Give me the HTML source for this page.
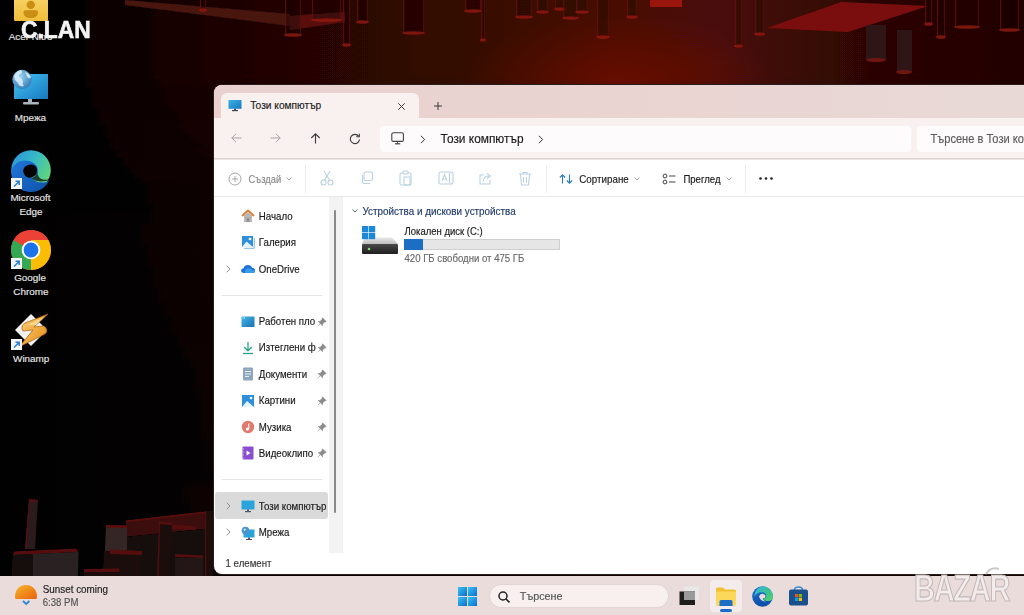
<!DOCTYPE html>
<html><head><meta charset="utf-8">
<style>
*{margin:0;padding:0;box-sizing:border-box}
html,body{width:1024px;height:615px;overflow:hidden;background:#050202;font-family:"Liberation Sans",sans-serif}
.a{position:absolute}
svg{position:absolute;overflow:visible}
.t{position:absolute;white-space:nowrap;line-height:1;-webkit-text-stroke:0.15px currentColor}
</style></head><body>
<svg style="left:0;top:0" width="1024" height="615" viewBox="0 0 1024 615">
<defs>
<linearGradient id="gt" x1="0" y1="0" x2="1024" y2="0" gradientUnits="userSpaceOnUse">
<stop offset="0" stop-color="#020101"/><stop offset="0.07" stop-color="#040202"/><stop offset="0.2" stop-color="#1a0505"/><stop offset="0.3" stop-color="#260605"/>
<stop offset="0.45" stop-color="#340806"/><stop offset="0.6" stop-color="#480a06"/><stop offset="0.7" stop-color="#4a0a07"/><stop offset="0.85" stop-color="#2c0606"/><stop offset="1" stop-color="#220505"/>
</linearGradient>
<radialGradient id="glow" cx="620" cy="85" r="120" gradientTransform="translate(620 85) scale(1.3 0.6) translate(-620 -85)" gradientUnits="userSpaceOnUse">
<stop offset="0" stop-color="#8e1604" stop-opacity="0.45"/><stop offset="1" stop-color="#8e1604" stop-opacity="0"/>
</radialGradient>
<linearGradient id="g2" x1="0" y1="0" x2="1" y2="0">
<stop offset="0" stop-color="#030101"/><stop offset="0.5" stop-color="#070303"/><stop offset="1" stop-color="#120404"/>
</linearGradient>
<linearGradient id="gv" x1="0" y1="0" x2="0" y2="1">
<stop offset="0" stop-color="#000" stop-opacity="0.1"/><stop offset="1" stop-color="#000" stop-opacity="0.0"/>
</linearGradient>
<linearGradient id="vmg" x1="0" y1="0" x2="0" y2="615" gradientUnits="userSpaceOnUse">
<stop offset="0" stop-color="#fff"/><stop offset="0.12" stop-color="#fff"/><stop offset="0.3" stop-color="#666"/><stop offset="0.6" stop-color="#3a3a3a"/><stop offset="1" stop-color="#2a2a2a"/>
</linearGradient>
<mask id="vm" maskUnits="userSpaceOnUse" x="0" y="0" width="1024" height="615"><rect x="0" y="0" width="1024" height="615" fill="url(#vmg)"/></mask>
<filter id="bl" x="-5%" y="-5%" width="110%" height="110%"><feGaussianBlur stdDeviation="0.7"/></filter>
</defs>
<rect x="0" y="0" width="1024" height="615" fill="url(#g2)"/>
<g filter="url(#bl)">
<rect x="0" y="0" width="1024" height="615" fill="url(#gt)" mask="url(#vm)"/>
<rect x="0" y="0" width="1024" height="92" fill="url(#glow)"/>
<path d="M125 0 L290 14 L290 26 L125 5z" fill="#4a1210"/>
<path d="M290 16 L345 12 L345 22 L290 30z" fill="#5a100c"/>
<rect x="343" y="0" width="7" height="45" fill="#1a0606" opacity="0.4"/><rect x="343" y="0" width="1.2" height="45" fill="#7a1410" opacity="0.6"/><rect x="348.8" y="0" width="1.2" height="45" fill="#7a1410" opacity="0.4"/><ellipse cx="346.5" cy="45" rx="4.5" ry="1.8" fill="#a01a10" opacity="0.7"/><rect x="357" y="0" width="11" height="22" fill="#1a0606" opacity="0.4"/><rect x="357" y="0" width="1.2" height="22" fill="#7a1410" opacity="0.6"/><rect x="366.8" y="0" width="1.2" height="22" fill="#7a1410" opacity="0.4"/><ellipse cx="362.5" cy="22" rx="6.5" ry="1.8" fill="#a01a10" opacity="0.7"/><rect x="403" y="0" width="21" height="33" fill="#1a0606" opacity="0.4"/><rect x="403" y="0" width="1.2" height="33" fill="#7a1410" opacity="0.6"/><rect x="422.8" y="0" width="1.2" height="33" fill="#7a1410" opacity="0.4"/><ellipse cx="413.5" cy="33" rx="11.5" ry="1.8" fill="#a01a10" opacity="0.7"/><rect x="465" y="0" width="16" height="11" fill="#1a0606" opacity="0.4"/><rect x="465" y="0" width="1.2" height="11" fill="#7a1410" opacity="0.6"/><rect x="479.8" y="0" width="1.2" height="11" fill="#7a1410" opacity="0.4"/><ellipse cx="473.0" cy="11" rx="9.0" ry="1.8" fill="#a01a10" opacity="0.7"/><rect x="481" y="0" width="4" height="40" fill="#1a0606" opacity="0.4"/><rect x="481" y="0" width="1.2" height="40" fill="#7a1410" opacity="0.6"/><rect x="483.8" y="0" width="1.2" height="40" fill="#7a1410" opacity="0.4"/><ellipse cx="483.0" cy="40" rx="3.0" ry="1.8" fill="#a01a10" opacity="0.7"/><rect x="516" y="0" width="16" height="17" fill="#1a0606" opacity="0.4"/><rect x="516" y="0" width="1.2" height="17" fill="#7a1410" opacity="0.6"/><rect x="530.8" y="0" width="1.2" height="17" fill="#7a1410" opacity="0.4"/><ellipse cx="524.0" cy="17" rx="9.0" ry="1.8" fill="#a01a10" opacity="0.7"/><rect x="537" y="0" width="11" height="12" fill="#1a0606" opacity="0.4"/><rect x="537" y="0" width="1.2" height="12" fill="#7a1410" opacity="0.6"/><rect x="546.8" y="0" width="1.2" height="12" fill="#7a1410" opacity="0.4"/><ellipse cx="542.5" cy="12" rx="6.5" ry="1.8" fill="#a01a10" opacity="0.7"/><rect x="555" y="0" width="10" height="9" fill="#1a0606" opacity="0.4"/><rect x="555" y="0" width="1.2" height="9" fill="#7a1410" opacity="0.6"/><rect x="563.8" y="0" width="1.2" height="9" fill="#7a1410" opacity="0.4"/><ellipse cx="560.0" cy="9" rx="6.0" ry="1.8" fill="#a01a10" opacity="0.7"/><rect x="563" y="0" width="15" height="18" fill="#1a0606" opacity="0.4"/><rect x="563" y="0" width="1.2" height="18" fill="#7a1410" opacity="0.6"/><rect x="576.8" y="0" width="1.2" height="18" fill="#7a1410" opacity="0.4"/><ellipse cx="570.5" cy="18" rx="8.5" ry="1.8" fill="#a01a10" opacity="0.7"/><rect x="576" y="0" width="12" height="12" fill="#1a0606" opacity="0.4"/><rect x="576" y="0" width="1.2" height="12" fill="#7a1410" opacity="0.6"/><rect x="586.8" y="0" width="1.2" height="12" fill="#7a1410" opacity="0.4"/><ellipse cx="582.0" cy="12" rx="7.0" ry="1.8" fill="#a01a10" opacity="0.7"/><rect x="597" y="0" width="12" height="37" fill="#1a0606" opacity="0.4"/><rect x="597" y="0" width="1.2" height="37" fill="#7a1410" opacity="0.6"/><rect x="607.8" y="0" width="1.2" height="37" fill="#7a1410" opacity="0.4"/><ellipse cx="603.0" cy="37" rx="7.0" ry="1.8" fill="#a01a10" opacity="0.7"/><rect x="627" y="0" width="10" height="17" fill="#1a0606" opacity="0.4"/><rect x="627" y="0" width="1.2" height="17" fill="#7a1410" opacity="0.6"/><rect x="635.8" y="0" width="1.2" height="17" fill="#7a1410" opacity="0.4"/><ellipse cx="632.0" cy="17" rx="6.0" ry="1.8" fill="#a01a10" opacity="0.7"/><rect x="735" y="0" width="7" height="46" fill="#1a0606" opacity="0.4"/><rect x="735" y="0" width="1.2" height="46" fill="#7a1410" opacity="0.6"/><rect x="740.8" y="0" width="1.2" height="46" fill="#7a1410" opacity="0.4"/><ellipse cx="738.5" cy="46" rx="4.5" ry="1.8" fill="#a01a10" opacity="0.7"/><rect x="755" y="0" width="9" height="34" fill="#1a0606" opacity="0.4"/><rect x="755" y="0" width="1.2" height="34" fill="#7a1410" opacity="0.6"/><rect x="762.8" y="0" width="1.2" height="34" fill="#7a1410" opacity="0.4"/><ellipse cx="759.5" cy="34" rx="5.5" ry="1.8" fill="#a01a10" opacity="0.7"/><rect x="925" y="0" width="7" height="24" fill="#1a0606" opacity="0.4"/><rect x="925" y="0" width="1.2" height="24" fill="#7a1410" opacity="0.6"/><rect x="930.8" y="0" width="1.2" height="24" fill="#7a1410" opacity="0.4"/><ellipse cx="928.5" cy="24" rx="4.5" ry="1.8" fill="#a01a10" opacity="0.7"/><rect x="937" y="0" width="8" height="37" fill="#1a0606" opacity="0.4"/><rect x="937" y="0" width="1.2" height="37" fill="#7a1410" opacity="0.6"/><rect x="943.8" y="0" width="1.2" height="37" fill="#7a1410" opacity="0.4"/><ellipse cx="941.0" cy="37" rx="5.0" ry="1.8" fill="#a01a10" opacity="0.7"/><rect x="955" y="0" width="24" height="27" fill="#1a0606" opacity="0.4"/><rect x="955" y="0" width="1.2" height="27" fill="#7a1410" opacity="0.6"/><rect x="977.8" y="0" width="1.2" height="27" fill="#7a1410" opacity="0.4"/><ellipse cx="967.0" cy="27" rx="13.0" ry="1.8" fill="#a01a10" opacity="0.7"/><rect x="1000" y="0" width="19" height="30" fill="#1a0606" opacity="0.4"/><rect x="1000" y="0" width="1.2" height="30" fill="#7a1410" opacity="0.6"/><rect x="1017.8" y="0" width="1.2" height="30" fill="#7a1410" opacity="0.4"/><ellipse cx="1009.5" cy="30" rx="10.5" ry="1.8" fill="#a01a10" opacity="0.7"/><rect x="285" y="0" width="16" height="35" fill="#1a0606" opacity="0.4"/><rect x="285" y="0" width="1.2" height="35" fill="#7a1410" opacity="0.6"/><rect x="299.8" y="0" width="1.2" height="35" fill="#7a1410" opacity="0.4"/><ellipse cx="293.0" cy="35" rx="9.0" ry="1.8" fill="#a01a10" opacity="0.7"/><rect x="312" y="0" width="29" height="20" fill="#1a0606" opacity="0.4"/><rect x="312" y="0" width="1.2" height="20" fill="#7a1410" opacity="0.6"/><rect x="339.8" y="0" width="1.2" height="20" fill="#7a1410" opacity="0.4"/><ellipse cx="326.5" cy="20" rx="15.5" ry="1.8" fill="#a01a10" opacity="0.7"/><rect x="200" y="0" width="6" height="10" fill="#1a0606" opacity="0.4"/><rect x="200" y="0" width="1.2" height="10" fill="#7a1410" opacity="0.6"/><rect x="204.8" y="0" width="1.2" height="10" fill="#7a1410" opacity="0.4"/><ellipse cx="203.0" cy="10" rx="4.0" ry="1.8" fill="#a01a10" opacity="0.7"/>
<path d="M767 28 L841 2 L928 6 L848 32z" fill="#7a0e08"/>
<rect x="866" y="25" width="20" height="35" fill="#2e1a1a" opacity="0.8"/><ellipse cx="876" cy="60" rx="10" ry="2" fill="#9a1a10" opacity="0.6"/>
<rect x="897" y="30" width="15" height="42" fill="#2e1a1a" opacity="0.8"/><ellipse cx="904" cy="72" rx="8" ry="2" fill="#9a1a10" opacity="0.6"/>
<rect x="650" y="0" width="32" height="7" fill="#9a160a"/>
<path d="M29 499 L38 500 L35 549 L25 549z" fill="#2a1a1a"/><path d="M29 499 L38 500 L38 502 L29 501z" fill="#5a0e0a"/><path d="M25 549 L29 499 L30 499 L26.5 549z" fill="#6a0e0a" opacity="0.7"/>
<path d="M14 551.5 L76 548.5 L78.5 552 L13 555z" fill="#560c0a"/><path d="M13 555 L78.5 552 L78 577 L12 577z" fill="#2c2424"/><path d="M13 555 L33 554 L33 577 L12 577z" fill="#180c0c"/>
<path d="M126 520.5 L213 510.8 L213 528 L126 536.7z" fill="#3a0e0c"/><path d="M126 520.5 L213 510.8 L213 512.5 L126 522.3z" fill="#5a0e0a"/><path d="M126 536.7 L213 528 L213 577 L126 577z" fill="#140808"/>
<path d="M106 525 L127 525.5 L127 550.6 L105 551z" fill="#342828"/><path d="M106 525 L127 525.5 L127 528 L106 527.5z" fill="#5e0e0a"/>
<path d="M104 551 L142 552 L142 577 L103 577z" fill="#1c0e0e"/><path d="M110 549.6 L142 551 L142 555 L110 554z" fill="#560c0a"/>
<path d="M159 521.6 L172 522.5 L171 577 L157 577z" fill="#1e1010"/><path d="M159 521.6 L172 522.5 L172 525 L159 524z" fill="#560c0a"/><path d="M157 577 L159 521.6 L160.2 521.6 L158.5 577z" fill="#6a0e0a" opacity="0.7"/>
<path d="M172 524.8 L195.7 526 L195.7 530 L172 529z" fill="#560c0a"/><path d="M175 554 L203 555.5 L203 558 L175 557z" fill="#560c0a"/><path d="M175 557 L203 558 L203 577 L175 577z" fill="#201212"/>
<path d="M84 569 L119.4 568.5 L119.4 572 L84 572.5z" fill="#560c0a"/><path d="M84 572.5 L119.4 572 L119.4 577 L84 577z" fill="#1c0e0e"/>
<path d="M205 511 L213 510.5 L213 577 L205 577z" fill="#1a0c0c"/><path d="M205 511 L206.2 511 L206.2 577 L205 577z" fill="#6a0e0a" opacity="0.7"/>
</g>
</svg>
<svg style="left:14px;top:0px" width="34" height="21" viewBox="0 0 34 21"><defs><linearGradient id="uy" x1="0" y1="0" x2="0" y2="1"><stop offset="0" stop-color="#f7d46a"/><stop offset="1" stop-color="#f0bd3a"/></linearGradient></defs>
<rect x="0" y="-4" width="34" height="25" rx="1.5" fill="url(#uy)"/>
<circle cx="16.8" cy="4.9" r="4.2" fill="#c98e12"/><path d="M9.4 12 Q9.4 10.3 11.5 10.3 H22 Q24 10.3 24 12 Q24 18 16.7 18 Q9.4 18 9.4 12z" fill="#c98e12"/></svg>
<div class="t" style="left:8.8px;top:32.17px;font-size:9.8px;color:#e8e8e8;">Acer Nitro</div>
<div class="t" style="left:21.0px;top:18.52px;font-size:22.8px;color:#f4f4f4;font-weight:bold;transform:scaleY(1.07);transform-origin:0 19.38px;-webkit-text-stroke:0.6px #f4f4f4;">C.LAN</div>
<svg style="left:12px;top:68px" width="40" height="38" viewBox="0 0 40 38"><defs><linearGradient id="mon" x1="0" y1="0" x2="1" y2="1"><stop offset="0" stop-color="#44c4f2"/><stop offset="1" stop-color="#1878c0"/></linearGradient>
<radialGradient id="glb" cx="0.4" cy="0.35" r="0.7"><stop offset="0" stop-color="#9fd4f0"/><stop offset="1" stop-color="#2f79b8"/></radialGradient></defs>
<rect x="2" y="6" width="34" height="25" fill="url(#mon)"/>
<rect x="16" y="31" width="4" height="3" fill="#a9b4bc"/><rect x="11" y="34" width="16" height="2.4" rx="1" fill="#a9b4bc"/>
<circle cx="10" cy="11.5" r="9.7" fill="url(#glb)"/>
<path d="M2 8 q2 -5 7 -6 q2 2 0 4 q-3 0 -2 3 q3 1 4 4 q-1 3 1 5 q-3 1 -5 -1 q-1 -3 -3 -4 q-2 -2 -2 -5z M13 4 q4 1 6 5 q-1 2 -3 1 q-2 -3 -3 -6z" fill="#d6ecf8" opacity="0.9"/></svg>
<div class="t" style="left:14.8px;top:113.38px;font-size:9.9px;color:#e8e8e8;">Мрежа</div>
<svg style="left:11px;top:150px" width="40" height="40" viewBox="0 0 40 40"><defs><linearGradient id="e1" x1="0" y1="0" x2="1" y2="0.6"><stop offset="0" stop-color="#2a8ee0"/><stop offset="0.5" stop-color="#36b8c8"/><stop offset="1" stop-color="#62d67a"/></linearGradient>
<linearGradient id="e2" x1="0" y1="0" x2="1" y2="1"><stop offset="0" stop-color="#1f78d8"/><stop offset="1" stop-color="#0f50a8"/></linearGradient></defs>
<circle cx="20" cy="20" r="19.8" fill="url(#e1)"/>
<path d="M0.3 21 Q3 11 14 10.5 Q26 11 27 20 Q27 26 20 27.5 Q24 33 33 32.5 Q37 32 38.5 29.5 A19.8 19.8 0 0 1 0.3 21z" fill="url(#e2)"/>
<path d="M12 21 Q13 14.5 20 14.5 Q26.5 15 26 21 Q25.5 26 20 27.5 Q14 29 12 21z" fill="#060202"/>
<path d="M26 21 Q26 27 20 28 Q23 31 30 31.5 Q36 31.5 38.6 29 Q36 30 32 29.5 Q27 29 26 21z" fill="#0a0303" opacity="0.7"/></svg>
<svg style="left:11px;top:178px" width="11" height="11" viewBox="0 0 11 11"><rect width="11" height="11" fill="#f4f4f4"/><path d="M3 8.5 L8 3.5 M4.5 3.2 H8.2 V7" stroke="#2b7fd0" stroke-width="1.5" fill="none"/></svg>
<div class="t" style="left:10.4px;top:193.39px;font-size:9.9px;color:#e8e8e8;">Microsoft</div>
<div class="t" style="left:19.5px;top:206.89px;font-size:9.9px;color:#e8e8e8;">Edge</div>
<svg style="left:11px;top:230px" width="40" height="40" viewBox="0 0 40 40"><circle cx="20" cy="20" r="20" fill="#e94234"/>
<path d="M20 20 L2.7 10 A20 20 0 0 0 20 40 Z" fill="#34a853"/>
<path d="M20 20 L20 40 A20 20 0 0 0 37.3 10 L20 10z" fill="#fbbc04"/>
<path d="M20 20 L2.7 10 A20 20 0 0 1 20 0 A20 20 0 0 1 37.3 10 L20 10z" fill="#ea4335"/>
<circle cx="20" cy="20" r="9.3" fill="#fff"/><circle cx="20" cy="20" r="7.4" fill="#1a73e8"/></svg>
<svg style="left:11px;top:258px" width="11" height="11" viewBox="0 0 11 11"><rect width="11" height="11" fill="#f4f4f4"/><path d="M3 8.5 L8 3.5 M4.5 3.2 H8.2 V7" stroke="#2b7fd0" stroke-width="1.5" fill="none"/></svg>
<div class="t" style="left:14.2px;top:273.38px;font-size:9.9px;color:#e8e8e8;">Google</div>
<div class="t" style="left:13.3px;top:287.08px;font-size:9.9px;color:#e8e8e8;">Chrome</div>
<svg style="left:14px;top:313px" width="34" height="34" viewBox="0 0 34 34"><defs><linearGradient id="wb" x1="0" y1="0" x2="1" y2="1"><stop offset="0" stop-color="#ffd37a"/><stop offset="1" stop-color="#e08a12"/></linearGradient></defs>
<path d="M17 1 L33 17 L17 33 L1 17z" fill="#f2f2f2"/>
<path d="M34 1 L11 10 Q7 12 8 16 L9 18 L19 17 L5 34 L31 21 Q34 19 32 15 L30 13 L20 14z" fill="url(#wb)" stroke="#a85a08" stroke-width="0.7"/><path d="M30 4 L13 12 L22 12z" fill="#ffe6a8" opacity="0.7"/></svg>
<svg style="left:11px;top:339px" width="11" height="11" viewBox="0 0 11 11"><rect width="11" height="11" fill="#f4f4f4"/><path d="M3 8.5 L8 3.5 M4.5 3.2 H8.2 V7" stroke="#2b7fd0" stroke-width="1.5" fill="none"/></svg>
<div class="t" style="left:13.1px;top:354.19px;font-size:9.9px;color:#e8e8e8;">Winamp</div>
<div class="a" style="left:214px;top:85px;width:820px;height:489px;background:#fff;border-radius:8px 0 0 8px;box-shadow:0 0 0 1px #2a1c1c"></div>
<div class="a" style="left:214px;top:85px;width:820px;height:34px;background:linear-gradient(90deg,#e8d1ce 0%,#ead4d1 50%,#e8d9d7 100%);border-radius:8px 0 0 0"></div>
<div class="a" style="left:221px;top:93px;width:198px;height:26px;background:#f8f1f0;border-radius:6px 6px 0 0"></div>
<div class="a" style="left:214px;top:118px;width:820px;height:41px;background:#f8f1f0;border-bottom:1px solid #dcd3d3"></div>
<svg style="left:228px;top:99px" width="14" height="13" viewBox="0 0 14 13"><defs><linearGradient id="tm" x1="0" y1="0" x2="1" y2="1"><stop offset="0" stop-color="#3ab4e6"/><stop offset="1" stop-color="#1877c0"/></linearGradient></defs>
<rect x="0.5" y="1" width="13" height="8.8" fill="url(#tm)"/><rect x="6" y="9.8" width="2" height="1.5" fill="#445"/><rect x="4" y="11" width="6" height="1.2" fill="#445"/></svg>
<div class="t" style="left:250.2px;top:100.93px;font-size:10.2px;color:#1a1a1a;">Този компютър</div>
<svg style="left:397.5px;top:102.5px" width="7" height="7" viewBox="0 0 7 7"><path d="M0.3 0.3 L6.7 6.7 M6.7 0.3 L0.3 6.7" stroke="#333" stroke-width="0.95"/></svg>
<svg style="left:433.5px;top:102px" width="8" height="8" viewBox="0 0 8 8"><path d="M4 0 V8 M0 4 H8" stroke="#333" stroke-width="0.95"/></svg>
<svg style="left:231px;top:133px" width="11" height="10" viewBox="0 0 11 10"><path d="M10.5 5 H0.8 M5 0.8 L0.8 5 L5 9.2" stroke="#a8a4a4" stroke-width="1" fill="none"/></svg>
<svg style="left:270px;top:133px" width="11" height="10" viewBox="0 0 11 10"><path d="M0.5 5 H10.2 M6 0.8 L10.2 5 L6 9.2" stroke="#a8a4a4" stroke-width="1" fill="none"/></svg>
<svg style="left:310px;top:133px" width="11" height="11" viewBox="0 0 11 11"><path d="M5.5 10.5 V0.8 M1.3 5 L5.5 0.8 L9.7 5" stroke="#3a3a3a" stroke-width="1.1" fill="none"/></svg>
<svg style="left:349px;top:133px" width="12" height="12" viewBox="0 0 12 12"><path d="M9.6 3.2 A4.6 4.6 0 1 0 10.5 6.5" stroke="#3a3a3a" stroke-width="1.1" fill="none"/><path d="M10.3 0.8 V3.8 H7.3" stroke="#3a3a3a" stroke-width="1.1" fill="none"/></svg>
<div class="a" style="left:380px;top:126px;width:531px;height:26px;background:#fdfbfb;border-radius:4px"></div>
<svg style="left:391px;top:132px" width="14" height="13" viewBox="0 0 14 13"><rect x="0.8" y="0.8" width="11.6" height="8.6" rx="1.5" stroke="#404040" stroke-width="1.1" fill="none"/><path d="M4 11.8 H9.2" stroke="#404040" stroke-width="1.2"/><path d="M6.6 9.4 V11.5" stroke="#404040" stroke-width="1"/></svg>
<svg style="left:420px;top:135px" width="6" height="9" viewBox="0 0 6 9"><path d="M1 0.8 L4.6 4.5 L1 8.2" stroke="#333" stroke-width="1" fill="none"/></svg>
<div class="t" style="left:440.6px;top:134.08px;font-size:11.9px;color:#1a1a1a;transform:scaleY(1.12);transform-origin:0 10.12px;">Този компютър</div>
<svg style="left:538px;top:135px" width="6" height="9" viewBox="0 0 6 9"><path d="M1 0.8 L4.6 4.5 L1 8.2" stroke="#333" stroke-width="1" fill="none"/></svg>
<div class="a" style="left:917px;top:126px;width:120px;height:26px;background:#fdfbfb;border-radius:4px"></div>
<div class="t" style="left:930.5px;top:134.26px;font-size:11.1px;color:#5c5c5c;transform:scaleY(1.08);transform-origin:0 9.43px;">Търсене в Този компютър</div>
<div class="a" style="left:214px;top:159px;width:820px;height:38px;background:#ffffff;border-top:1px solid #ebe4e4;border-bottom:1px solid #e8e8e8"></div>
<svg style="left:228px;top:172px" width="14" height="14" viewBox="0 0 14 14"><circle cx="7" cy="7" r="6" stroke="#a9a9a9" stroke-width="1" fill="none"/><path d="M7 4 V10 M4 7 H10" stroke="#a9a9a9" stroke-width="1"/></svg>
<div class="t" style="left:248.5px;top:175.21px;font-size:9.4px;color:#8a8a8a;transform:scaleY(1.1);transform-origin:0 7.99px;">Създай</div>
<svg style="left:286px;top:177px" width="6" height="4" viewBox="0 0 6 4"><path d="M0.5 0.5 L3 3 L5.5 0.5" stroke="#999" stroke-width="0.9" fill="none"/></svg>
<div class="a" style="left:305px;top:165px;width:1px;height:28px;background:#ececec;"></div>
<svg style="left:320px;top:170px" width="14" height="16" viewBox="0 0 14 16"><path d="M4 1 L10 11 M10 1 L4 11" stroke="#b9d2e2" stroke-width="1.1"/><circle cx="3.5" cy="12.5" r="2.5" stroke="#b9d2e2" stroke-width="1.1" fill="none"/><circle cx="10.5" cy="12.5" r="2.5" stroke="#b9d2e2" stroke-width="1.1" fill="none"/></svg>
<svg style="left:360px;top:171px" width="14" height="14" viewBox="0 0 14 14"><rect x="4" y="1" width="8.5" height="8.5" rx="1.5" stroke="#b9d2e2" stroke-width="1.1" fill="none"/><path d="M2.5 4 V11 Q2.5 12.5 4 12.5 H10" stroke="#b9d2e2" stroke-width="1.1" fill="none"/></svg>
<svg style="left:399px;top:170px" width="14" height="16" viewBox="0 0 14 16"><rect x="1" y="3" width="11" height="12" rx="1.5" stroke="#b9d2e2" stroke-width="1.1" fill="none"/><rect x="4" y="1" width="5" height="3" rx="1" stroke="#b9d2e2" stroke-width="1.1" fill="#fff"/><rect x="5" y="7" width="6" height="8" stroke="#b9d2e2" stroke-width="1" fill="none"/></svg>
<svg style="left:438px;top:171px" width="16" height="14" viewBox="0 0 16 14"><rect x="1" y="1" width="14" height="12" rx="2" stroke="#b9d2e2" stroke-width="1.1" fill="none"/><path d="M4 10 L6.5 3.5 L9 10 M5 8 H8 M11.5 2 V12" stroke="#b9d2e2" stroke-width="1.1" fill="none"/></svg>
<svg style="left:478px;top:171px" width="15" height="14" viewBox="0 0 15 14"><path d="M6 4 H2 V13 H12 V9" stroke="#b9d2e2" stroke-width="1.1" fill="none"/><path d="M5.5 10 Q6 5 11 5 M9 2.5 L12.5 5 L9 7.5" stroke="#b9d2e2" stroke-width="1.1" fill="none"/></svg>
<svg style="left:518px;top:171px" width="14" height="15" viewBox="0 0 14 15"><path d="M1 3 H13 M5 3 V1.5 H9 V3 M2.5 3 L3.5 14 H10.5 L11.5 3 M5.5 6 V11.5 M8.5 6 V11.5" stroke="#b9d2e2" stroke-width="1.1" fill="none"/></svg>
<div class="a" style="left:546px;top:165px;width:1px;height:28px;background:#ececec;"></div>
<svg style="left:559px;top:174px" width="15" height="10" viewBox="0 0 15 10"><path d="M3.5 9.5 V0.8 M0.8 3.5 L3.5 0.8 L6.2 3.5" stroke="#2a7ab8" stroke-width="1.1" fill="none"/><path d="M10.5 0.5 V9.2 M7.8 6.5 L10.5 9.2 L13.2 6.5" stroke="#2a7ab8" stroke-width="1.1" fill="none"/></svg>
<div class="t" style="left:579.3px;top:174.87px;font-size:9.8px;color:#1a1a1a;transform:scaleY(1.1);transform-origin:0 8.33px;">Сортиране</div>
<svg style="left:634px;top:177px" width="6" height="4" viewBox="0 0 6 4"><path d="M0.5 0.5 L3 3 L5.5 0.5" stroke="#999" stroke-width="0.9" fill="none"/></svg>
<svg style="left:662px;top:173px" width="15" height="12" viewBox="0 0 15 12"><circle cx="3" cy="3" r="1.9" stroke="#444" stroke-width="1" fill="none"/><circle cx="3" cy="9" r="1.9" stroke="#444" stroke-width="1" fill="none"/><path d="M7 3 H13.5 M7 9 H13.5" stroke="#444" stroke-width="1"/></svg>
<div class="t" style="left:683.4px;top:175.04px;font-size:9.6px;color:#1a1a1a;transform:scaleY(1.1);transform-origin:0 8.16px;">Преглед</div>
<svg style="left:726px;top:177px" width="6" height="4" viewBox="0 0 6 4"><path d="M0.5 0.5 L3 3 L5.5 0.5" stroke="#999" stroke-width="0.9" fill="none"/></svg>
<div class="a" style="left:745px;top:165px;width:1px;height:28px;background:#ececec;"></div>
<svg style="left:759px;top:177px" width="14" height="3" viewBox="0 0 14 3"><circle cx="1.5" cy="1.5" r="1.3" fill="#222"/><circle cx="7" cy="1.5" r="1.3" fill="#222"/><circle cx="12.5" cy="1.5" r="1.3" fill="#222"/></svg>
<div class="a" style="left:329px;top:197px;width:13px;height:356px;background:#f3f3f3;"></div>
<div class="a" style="left:334px;top:210px;width:2px;height:303px;background:#8a8a8a;border-radius:1px"></div>
<div class="a" style="left:342px;top:197px;width:1px;height:356px;background:#f0f0f0;"></div>
<div class="a" style="left:222px;top:295px;width:100px;height:1px;background:#e6e6e6;"></div>
<div class="a" style="left:222px;top:479px;width:100px;height:1px;background:#e6e6e6;"></div>
<div class="a" style="left:215px;top:492px;width:113px;height:27px;background:#dadada;border-radius:3px"></div>
<svg style="left:241px;top:209px" width="14" height="14" viewBox="0 0 14 14"><path d="M1 7 L7 1.5 L13 7" stroke="#e07a30" stroke-width="1.8" fill="none" stroke-linejoin="round"/><path d="M3 6.5 V13 H11 V6.5 L7 3z" fill="#b7b7b7"/><rect x="5.6" y="9" width="2.8" height="4" fill="#8f8f8f"/></svg>
<div class="t" style="left:258.8px;top:211.56px;font-size:9.7px;color:#1a1a1a;transform:scaleY(1.1);transform-origin:0 8.24px;">Начало</div>
<svg style="left:241px;top:235px" width="14" height="14" viewBox="0 0 14 14"><rect x="1" y="1" width="11" height="11" fill="#2f8fdc"/><path d="M1 12 L5.5 6.5 L12 12z" fill="#e8f4fc"/><circle cx="9" cy="4" r="1.3" fill="#fff"/><path d="M3 13.3 H13.3 V3" stroke="#7ab8e8" stroke-width="1" fill="none"/></svg>
<div class="t" style="left:258.8px;top:237.75px;font-size:9.7px;color:#1a1a1a;transform:scaleY(1.1);transform-origin:0 8.24px;">Галерия</div>
<svg style="left:241px;top:262px" width="14" height="14" viewBox="0 0 14 14"><path d="M2.5 11 Q0 11 0 8.6 Q0 6.3 2.6 6.2 Q3.5 3 7 3 Q10 3 11 5.8 Q14 5.8 14 8.5 Q14 11 11.5 11z" fill="#1e74d6"/><path d="M4 11 Q3 7 7 6.2 Q10 6 11.5 8 Q14 8 14 9.5 Q14 11 11.5 11z" fill="#3a9ce8"/></svg>
<div class="t" style="left:258.8px;top:264.56px;font-size:9.7px;color:#1a1a1a;transform:scaleY(1.1);transform-origin:0 8.24px;">OneDrive</div>
<svg style="left:226px;top:265px" width="5" height="8" viewBox="0 0 5 8"><path d="M0.7 0.7 L4 4 L0.7 7.3" stroke="#888" stroke-width="0.9" fill="none"/></svg>
<svg style="left:241px;top:315px" width="14" height="14" viewBox="0 0 14 14"><defs><linearGradient id="dkg" x1="0" y1="0" x2="1" y2="1"><stop offset="0" stop-color="#44b8e8"/><stop offset="1" stop-color="#1a6fb0"/></linearGradient></defs><rect x="0.5" y="1.5" width="13" height="10.5" rx="0.8" fill="url(#dkg)"/><rect x="1.5" y="2.5" width="1" height="1" fill="#dff"/><rect x="3" y="2.5" width="1" height="1" fill="#dff"/></svg>
<div class="t" style="left:258.8px;top:317.36px;font-size:9.7px;color:#1a1a1a;transform:scaleY(1.1);transform-origin:0 8.24px;">Работен пло</div>
<svg style="left:241px;top:341px" width="14" height="14" viewBox="0 0 14 14"><path d="M7 1 V9.5 M3.2 6 L7 9.8 L10.8 6" stroke="#2aa38a" stroke-width="1.3" fill="none"/><path d="M2 12.5 H12" stroke="#2aa38a" stroke-width="1.3"/></svg>
<div class="t" style="left:258.8px;top:343.36px;font-size:9.7px;color:#1a1a1a;transform:scaleY(1.1);transform-origin:0 8.24px;">Изтеглени ф</div>
<svg style="left:241px;top:367px" width="14" height="14" viewBox="0 0 14 14"><rect x="2" y="0.5" width="10" height="13" rx="1" fill="#8ea6bf"/><path d="M4 4.5 H10 M4 7 H10 M4 9.5 H8" stroke="#e8eef4" stroke-width="1"/></svg>
<div class="t" style="left:258.8px;top:370.06px;font-size:9.7px;color:#1a1a1a;transform:scaleY(1.1);transform-origin:0 8.24px;">Документи</div>
<svg style="left:241px;top:394px" width="14" height="14" viewBox="0 0 14 14"><rect x="1" y="1" width="12" height="12" fill="#2f8fdc"/><path d="M1 13 L6 7 L13 13z" fill="#e8f4fc"/><circle cx="10" cy="4" r="1.3" fill="#fff"/></svg>
<div class="t" style="left:258.8px;top:396.45px;font-size:9.7px;color:#1a1a1a;transform:scaleY(1.1);transform-origin:0 8.24px;">Картини</div>
<svg style="left:241px;top:420px" width="14" height="14" viewBox="0 0 14 14"><circle cx="7" cy="7" r="6.2" fill="#e07a6c"/><path d="M7.8 3.5 V8.8" stroke="#fff" stroke-width="1.1"/><circle cx="6.4" cy="9" r="1.6" fill="#fff"/></svg>
<div class="t" style="left:258.8px;top:422.75px;font-size:9.7px;color:#1a1a1a;transform:scaleY(1.1);transform-origin:0 8.24px;">Музика</div>
<svg style="left:241px;top:446px" width="14" height="14" viewBox="0 0 14 14"><rect x="1.5" y="0.5" width="11" height="13" rx="1" fill="#8a4fd0"/><path d="M5.5 4.5 L9.5 7 L5.5 9.5z" fill="#fff"/><path d="M1.5 3 H3 M1.5 6 H3 M1.5 9 H3 M1.5 12 H3" stroke="#c9a8ee" stroke-width="1"/></svg>
<div class="t" style="left:258.8px;top:448.75px;font-size:9.7px;color:#1a1a1a;transform:scaleY(1.1);transform-origin:0 8.24px;">Видеоклипо</div>
<svg style="left:241px;top:499px" width="14" height="14" viewBox="0 0 14 14"><rect x="0.5" y="1.5" width="13" height="9" fill="#2aa2dc"/><rect x="6" y="10.5" width="2" height="1.5" fill="#556"/><rect x="4" y="12" width="6" height="1.2" fill="#556"/></svg>
<div class="t" style="left:258.8px;top:501.75px;font-size:9.7px;color:#1a1a1a;transform:scaleY(1.1);transform-origin:0 8.24px;width:69px;overflow:hidden;">Този компютър</div>
<svg style="left:226px;top:502px" width="5" height="8" viewBox="0 0 5 8"><path d="M0.7 0.7 L4 4 L0.7 7.3" stroke="#888" stroke-width="0.9" fill="none"/></svg>
<svg style="left:241px;top:526px" width="14" height="14" viewBox="0 0 14 14"><rect x="2.5" y="3.5" width="11" height="8" fill="#2aa2dc"/><circle cx="4.5" cy="4.5" r="3.8" fill="#4d94c8"/><path d="M2.5 3 Q4 2 5 3.5 Q4 5 3 5z" fill="#bfe2f6"/><rect x="7" y="11.5" width="2" height="1.5" fill="#556"/><rect x="5" y="13" width="6" height="1" fill="#556"/></svg>
<div class="t" style="left:258.8px;top:528.25px;font-size:9.7px;color:#1a1a1a;transform:scaleY(1.1);transform-origin:0 8.24px;">Мрежа</div>
<svg style="left:226px;top:528px" width="5" height="8" viewBox="0 0 5 8"><path d="M0.7 0.7 L4 4 L0.7 7.3" stroke="#888" stroke-width="0.9" fill="none"/></svg>
<svg style="left:317px;top:317px" width="10" height="10" viewBox="0 0 10 10"><path d="M5.5 0.8 L9.2 4.5 L7.6 5 L5.6 7 L5.5 8.8 L1.2 4.5 L3 4.4 L5 2.4z M3.3 6.7 L0.8 9.2" fill="#8a8a8a" stroke="#8a8a8a" stroke-width="0.6"/></svg>
<svg style="left:317px;top:343px" width="10" height="10" viewBox="0 0 10 10"><path d="M5.5 0.8 L9.2 4.5 L7.6 5 L5.6 7 L5.5 8.8 L1.2 4.5 L3 4.4 L5 2.4z M3.3 6.7 L0.8 9.2" fill="#8a8a8a" stroke="#8a8a8a" stroke-width="0.6"/></svg>
<svg style="left:317px;top:369px" width="10" height="10" viewBox="0 0 10 10"><path d="M5.5 0.8 L9.2 4.5 L7.6 5 L5.6 7 L5.5 8.8 L1.2 4.5 L3 4.4 L5 2.4z M3.3 6.7 L0.8 9.2" fill="#8a8a8a" stroke="#8a8a8a" stroke-width="0.6"/></svg>
<svg style="left:317px;top:396px" width="10" height="10" viewBox="0 0 10 10"><path d="M5.5 0.8 L9.2 4.5 L7.6 5 L5.6 7 L5.5 8.8 L1.2 4.5 L3 4.4 L5 2.4z M3.3 6.7 L0.8 9.2" fill="#8a8a8a" stroke="#8a8a8a" stroke-width="0.6"/></svg>
<svg style="left:317px;top:422px" width="10" height="10" viewBox="0 0 10 10"><path d="M5.5 0.8 L9.2 4.5 L7.6 5 L5.6 7 L5.5 8.8 L1.2 4.5 L3 4.4 L5 2.4z M3.3 6.7 L0.8 9.2" fill="#8a8a8a" stroke="#8a8a8a" stroke-width="0.6"/></svg>
<svg style="left:317px;top:448px" width="10" height="10" viewBox="0 0 10 10"><path d="M5.5 0.8 L9.2 4.5 L7.6 5 L5.6 7 L5.5 8.8 L1.2 4.5 L3 4.4 L5 2.4z M3.3 6.7 L0.8 9.2" fill="#8a8a8a" stroke="#8a8a8a" stroke-width="0.6"/></svg>
<div class="t" style="left:225.5px;top:559.05px;font-size:9.7px;color:#3a3a3a;transform:scaleY(1.1);transform-origin:0 8.24px;">1 елемент</div>
<svg style="left:352px;top:209px" width="6" height="4" viewBox="0 0 6 4"><path d="M0.5 0.5 L3 3 L5.5 0.5" stroke="#4a5a80" stroke-width="0.9" fill="none"/></svg>
<div class="t" style="left:362.5px;top:206.89px;font-size:9.9px;color:#1f3a6a;transform:scaleY(1.05);transform-origin:0 8.42px;">Устройства и дискови устройства</div>
<svg style="left:361px;top:225px" width="38" height="30" viewBox="0 0 38 30"><defs><linearGradient id="dtop" x1="0" y1="0" x2="0" y2="1"><stop offset="0" stop-color="#e9e9e9"/><stop offset="1" stop-color="#bdbdbd"/></linearGradient>
<linearGradient id="dbot" x1="0" y1="0" x2="0" y2="1"><stop offset="0" stop-color="#4a4a4a"/><stop offset="1" stop-color="#1e1e1e"/></linearGradient></defs>
<path d="M4 12.5 H31 L37 19 H1z" fill="url(#dtop)"/><rect x="1" y="19" width="36" height="10" rx="1" fill="url(#dbot)"/><circle cx="8" cy="24" r="1.3" fill="#6fe070"/>
<rect x="1" y="1" width="6.3" height="6.3" fill="#1e88d8"/><rect x="7.9" y="1" width="6.3" height="6.3" fill="#1e88d8"/><rect x="1" y="7.9" width="6.3" height="6.3" fill="#1e88d8"/><rect x="7.9" y="7.9" width="6.3" height="6.3" fill="#1e88d8"/></svg>
<div class="t" style="left:404.5px;top:227.23px;font-size:9.5px;color:#1a1a1a;transform:scaleY(1.1);transform-origin:0 8.07px;">Локален диск (C:)</div>
<div class="a" style="left:404px;top:239px;width:156px;height:11px;background:#e6e6e6;border:1px solid #cfcfcf"></div>
<div class="a" style="left:404px;top:239px;width:19px;height:11px;background:#1c6ec4;"></div>
<div class="t" style="left:404.5px;top:253.64px;font-size:9.6px;color:#6a6a6a;transform:scaleY(1.1);transform-origin:0 8.16px;">420 ГБ свободни от 475 ГБ</div>
<div class="a" style="left:0px;top:576px;width:1024px;height:39px;background:#eadcdb;"></div>
<svg style="left:15px;top:584px" width="23" height="22" viewBox="0 0 23 22"><defs><linearGradient id="sun" x1="0" y1="0" x2="1" y2="1"><stop offset="0" stop-color="#f7b52a"/><stop offset="1" stop-color="#e8620e"/></linearGradient></defs>
<path d="M0.5 14.9 A10.94 10.94 0 1 1 21.5 14.9z" fill="url(#sun)"/><path d="M8 17 L11.2 20 L14.4 17" stroke="#2a8ad4" stroke-width="1.8" fill="none"/></svg>
<div class="t" style="left:42.7px;top:585.19px;font-size:9.9px;color:#1c1c1c;transform:scaleY(1.1);transform-origin:0 8.42px;">Sunset coming</div>
<div class="t" style="left:42.7px;top:598.44px;font-size:9.6px;color:#555;transform:scaleY(1.1);transform-origin:0 8.16px;">6:38 PM</div>
<svg style="left:458px;top:587px" width="19" height="19" viewBox="0 0 19 19"><defs><linearGradient id="st" x1="0" y1="0" x2="1" y2="1"><stop offset="0" stop-color="#3bc2f2"/><stop offset="1" stop-color="#0a6fd0"/></linearGradient></defs>
<rect x="0" y="0" width="9" height="9" fill="url(#st)"/><rect x="10" y="0" width="9" height="9" fill="url(#st)"/><rect x="0" y="10" width="9" height="9" fill="url(#st)"/><rect x="10" y="10" width="9" height="9" fill="url(#st)"/></svg>
<div class="a" style="left:489px;top:584px;width:180px;height:24px;background:#f7f0ef;border-radius:12px;border:1px solid #e2d6d5"></div>
<svg style="left:498px;top:591px" width="13" height="12" viewBox="0 0 13 12"><circle cx="5" cy="5" r="4" stroke="#222" stroke-width="1.5" fill="none"/><path d="M8 8 L11.5 11.3" stroke="#222" stroke-width="1.6"/></svg>
<div class="t" style="left:519.8px;top:591.42px;font-size:10.8px;color:#555;transform:scaleY(1.05);transform-origin:0 9.18px;">Търсене</div>
<svg style="left:679px;top:586px" width="21" height="20" viewBox="0 0 21 20"><rect x="5" y="0.5" width="15" height="13.5" rx="1" fill="#e8e8e8"/><rect x="0.5" y="5.5" width="15.5" height="13.5" fill="#1e1e1e"/><rect x="5" y="5.5" width="11" height="8.5" fill="#9a9a9a"/></svg>
<div class="a" style="left:710px;top:580px;width:32px;height:32px;background:#f4ecec;border-radius:4px"></div>
<svg style="left:715px;top:587px" width="22" height="19" viewBox="0 0 22 19"><path d="M1 2 Q1 0.5 2.5 0.5 H8 L10 2.5 H19.5 Q21 2.5 21 4 V17 Q21 18.5 19.5 18.5 H2.5 Q1 18.5 1 17z" fill="#f0c030"/>
<rect x="1" y="4.5" width="20" height="14" rx="1.2" fill="#fcd85a"/><path d="M4.5 19 V14.5 Q4.5 13 6 13 H16 Q17.5 13 17.5 14.5 V19z" fill="#1d6fc6"/></svg>
<div class="a" style="left:720px;top:609px;width:12px;height:3px;background:#1a6ccc;border-radius:2px"></div>
<svg style="left:752px;top:586px" width="21" height="21" viewBox="0 0 21 21"><defs><linearGradient id="te1" x1="0" y1="0" x2="1" y2="1"><stop offset="0" stop-color="#36b4e6"/><stop offset="0.6" stop-color="#39c48a"/><stop offset="1" stop-color="#5ad66a"/></linearGradient>
<linearGradient id="te2" x1="0" y1="0" x2="0" y2="1"><stop offset="0" stop-color="#1b6fd0"/><stop offset="1" stop-color="#0c4fa8"/></linearGradient></defs>
<circle cx="10.5" cy="10.5" r="10.3" fill="url(#te2)"/><path d="M10.5 0.2 A10.3 10.3 0 0 1 20.8 10.5 q0 4 -4 4.6 q-4.6 0 -5.6 -2.6 q3 -0.5 3 -2.6 q0 -3.6 -4.6 -3.6 q-5 0 -7.2 4.6 A10.3 10.3 0 0 1 10.5 0.2z" fill="url(#te1)"/>
<path d="M7 10.5 q1 -3 4 -2.6 q2.6 0.5 2.6 2 q0 2 -3 2.6 q0.8 2 3 3 q-5 0 -6.6 -5z" fill="#eadcdb"/></svg>
<svg style="left:788px;top:586px" width="21" height="21" viewBox="0 0 21 21"><path d="M6.5 4 Q6.5 1 10.5 1 Q14.5 1 14.5 4" stroke="#3a8fd8" stroke-width="1.5" fill="none"/><rect x="1" y="3.5" width="19" height="16" rx="2" fill="#1a4f8c"/><rect x="7" y="8" width="3.2" height="3.2" fill="#f25022"/><rect x="10.8" y="8" width="3.2" height="3.2" fill="#7fba00"/><rect x="7" y="11.8" width="3.2" height="3.2" fill="#00a4ef"/><rect x="10.8" y="11.8" width="3.2" height="3.2" fill="#ffb900"/></svg>
<div class="t" style="left:914.0px;top:575.50px;font-size:30px;color:#f3ecec;font-weight:bold;letter-spacing:-1.4px;-webkit-text-stroke:1px #c4b8b8;transform:scale(0.97,1.2);transform-origin:0 25.5px;">BAZAR</div>
<svg style="left:985px;top:566px" width="16" height="9" viewBox="0 0 16 9"><path d="M1 8 Q6 0 14 3" stroke="#d0c6c6" stroke-width="2" fill="none"/></svg>
</body></html>
